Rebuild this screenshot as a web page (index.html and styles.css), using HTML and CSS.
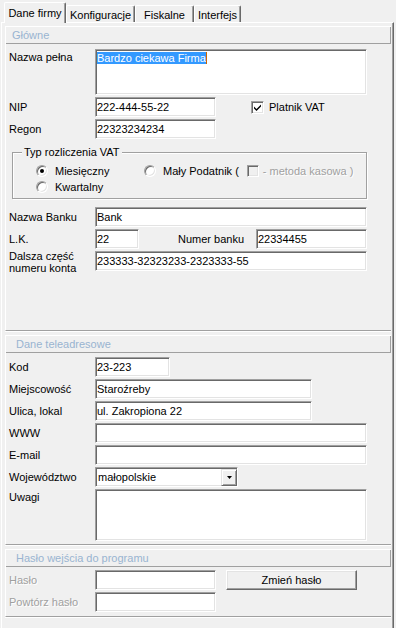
FILE: index.html
```html
<!DOCTYPE html>
<html lang="pl">
<head>
  <meta charset="UTF-8">
  <title>Dane firmy</title>
  <link rel="stylesheet" href="styles.css">
</head>
<body>
  <div class="tabs">
    <div class="tab tab-active">Dane firmy</div>
    <div class="tab tab-konf">Konfiguracje</div>
    <div class="tab tab-fisk">Fiskalne</div>
    <div class="tab tab-int">Interfejs</div>
  </div>

  <div class="page">
    <!-- Główne -->
    <div class="section">
      <div class="section-head head-main">Główne</div>
      <div class="section-body body-main">
        <div class="row row-top">
          <label class="lbl lbl-memo">Nazwa pełna</label>
          <div class="edit memo w-wide"><span class="sel">Bardzo ciekawa Firma</span></div>
        </div>
        <div class="row">
          <label class="lbl">NIP</label>
          <input class="edit w-short" type="text" value="222-444-55-22">
          <label class="chk-item"><span class="chk"><svg width="7" height="7" viewBox="0 0 7 7"><path d="M0 2.5 L2.5 5 L7 0.5 L7 2.5 L2.5 7 L0 4.5 Z" fill="#000"/></svg></span>Platnik VAT</label>
        </div>
        <div class="row">
          <label class="lbl">Regon</label>
          <input class="edit w-short" type="text" value="22323234234">
        </div>

        <fieldset class="group">
          <legend>Typ rozliczenia VAT</legend>
          <div class="radios">
            <label class="opt"><span class="radio radio-on"></span>Miesięczny</label>
            <label class="opt"><span class="radio"></span>Mały Podatnik (<span class="chk chk-off chk-inline"></span><span class="dim">- metoda kasowa )</span></label>
            <label class="opt"><span class="radio"></span>Kwartalny</label>
          </div>
        </fieldset>

        <div class="row row-bank">
          <label class="lbl">Nazwa Banku</label>
          <input class="edit w-wide" type="text" value="Bank">
        </div>
        <div class="row">
          <label class="lbl">L.K.</label>
          <input class="edit w-lk" type="text" value="22">
          <label class="lbl-mid">Numer banku</label>
          <input class="edit w-nr" type="text" value="22334455">
        </div>
        <div class="row row-top">
          <label class="lbl lbl-two">Dalsza część<br>numeru konta</label>
          <input class="edit w-wide" type="text" value="233333-32323233-2323333-55">
        </div>
      </div>
    </div>

    <!-- Dane teleadresowe -->
    <div class="section">
      <div class="section-head">Dane teleadresowe</div>
      <div class="section-body body-addr">
        <div class="row">
          <label class="lbl">Kod</label>
          <input class="edit w-kod" type="text" value="23-223">
        </div>
        <div class="row">
          <label class="lbl">Miejscowość</label>
          <input class="edit w-mid" type="text" value="Staroźreby">
        </div>
        <div class="row">
          <label class="lbl">Ulica, lokal</label>
          <input class="edit w-mid" type="text" value="ul. Zakropiona 22">
        </div>
        <div class="row">
          <label class="lbl">WWW</label>
          <input class="edit w-wide" type="text" value="">
        </div>
        <div class="row">
          <label class="lbl">E-mail</label>
          <input class="edit w-wide" type="text" value="">
        </div>
        <div class="row">
          <label class="lbl">Województwo</label>
          <div class="edit combo">
            <span class="combo-text">małopolskie</span>
            <span class="combo-btn"><svg width="5" height="3" viewBox="0 0 5 3"><polygon points="0,0 5,0 2.5,3" fill="#000"/></svg></span>
          </div>
        </div>
        <div class="row row-top">
          <label class="lbl lbl-memo">Uwagi</label>
          <textarea class="edit notes w-wide"></textarea>
        </div>
      </div>
    </div>

    <!-- Hasło -->
    <div class="section">
      <div class="section-head">Hasło wejścia do programu</div>
      <div class="section-body body-pass">
        <div class="row">
          <label class="lbl dim">Hasło</label>
          <input class="edit w-short" type="password" value="">
          <button class="btn" type="button">Zmień hasło</button>
        </div>
        <div class="row">
          <label class="lbl dim">Powtórz hasło</label>
          <input class="edit w-short" type="password" value="">
        </div>
      </div>
    </div>
  </div>
</body>
</html>
```

FILE: styles.css
```css
* { box-sizing: border-box; }
html { background: #f0f0f0; }
body {
  margin: 0; width: 396px; height: 628px; overflow: hidden;
  background: #f0f0f0; color: #000;
  font: 400 11px/13px "Liberation Sans", Arial, sans-serif;
}

/* tabs */
.tabs { display: flex; align-items: flex-end; height: 22px; padding-left: 4px; background: #f0f0f0; }
.tab {
  height: 17px; padding-top: 3px; text-align: center; background: #f0f0f0;
  border-top: 1px solid #fff; border-left: 1px solid #fff; border-right: 1px solid #696969;
  box-shadow: inset -1px 0 #a0a0a0; border-radius: 2px 2px 0 0;
}
.tab-active { width: 62px; height: 21px; padding-top: 4px; margin-bottom: -1px; position: relative; z-index: 1; }
.tab-konf { width: 69px; }
.tab-fisk { width: 59px; }
.tab-int { width: 47px; }

/* page */
.page {
  height: 606px; margin: 0 2px 0 1px; padding: 3px 2px 0 3px; background: #f0f0f0;
  border-top: 1px solid #fff; border-left: 1px solid #fff; border-right: 1px solid #696969;
  box-shadow: inset -1px 0 #a0a0a0;
}
.section { background: #f0f0f0; border-top: 1px solid #fff; border-left: 1px solid #fff; border-bottom: 1px solid #a0a0a0; box-shadow: 0 1px #fff; }
.section + .section { margin-top: 4px; }
.section-head {
  height: 17px; line-height: 16px; padding-left: 10px; color: #99b4d1;
  border-right: 1px solid #a0a0a0; border-bottom: 1px solid #a0a0a0;
}
.head-main { padding-left: 6px; }
.body-main { height: 286px; padding-top: 3px; }
.body-addr { padding: 2px 0 3px; }
.body-pass { padding: 1px 0 4px; }

/* rows */
.row { display: flex; align-items: center; margin-top: 2px; }
.row-top { align-items: flex-start; }
.row-bank { margin-top: 8px; }
.lbl { width: 89px; padding-left: 3px; flex-shrink: 0; white-space: nowrap; background: #f0f0f0; }
.lbl-memo { margin-top: 2px; }
.lbl-two { line-height: 12px; margin-top: -1px; }
.lbl-mid { width: 78px; margin-left: 39px; background: #f0f0f0; }
.dim { color: #a0a0a0; text-shadow: 1px 1px 0 #fff; }

/* edits */
.edit {
  height: 20px; padding: 0 1px; margin: 0; background: #fff; color: #000;
  font: inherit; outline: none;
  border: 1px solid; border-color: #a0a0a0 #fff #fff #a0a0a0;
  box-shadow: inset 1px 1px #696969, inset -1px -1px #e3e3e3;
}
.w-wide { width: 272px; }
.w-short { width: 121px; }
.w-lk { width: 44px; }
.w-nr { width: 111px; }
.w-kod { width: 75px; }
.w-mid { width: 217px; }
.memo { height: 46px; padding-top: 2px; line-height: 13px; }
.sel { background: #3399ff; color: #fff; border-right: 1px solid #cc6600; }
.notes { height: 52px; resize: none; }

/* checkbox & radios */
.chk-item { display: flex; align-items: center; margin-left: 35px; background: #f0f0f0; }
.chk {
  width: 13px; height: 13px; margin-right: 5px; background: #fff;
  display: flex; align-items: center; justify-content: center;
  border: 1px solid; border-color: #a0a0a0 #fff #fff #a0a0a0;
  box-shadow: inset 1px 1px #696969, inset -1px -1px #e3e3e3;
}
.chk-off { background: #f0f0f0; }
.chk-inline { width: 12px; height: 12px; margin: 0 4px 0 8px; }

.group {
  width: 355px; margin: 7px 0 0 6px; padding: 4px 0 3px; min-width: 0;
  border: 1px solid #a0a0a0; box-shadow: inset 1px 1px #fff, 1px 1px #fff;
}
.group legend { margin-left: 9px; padding: 0 2px; line-height: 13px; background: #f0f0f0; }
.radios { display: grid; grid-template-columns: 108px auto; grid-auto-rows: 16px; padding-left: 23px; }
.opt { display: flex; align-items: center; white-space: nowrap; background: #f0f0f0; }
.radio {
  width: 12px; height: 12px; margin-right: 7px; border-radius: 50%; background: #fff;
  border: 1px solid; border-color: #a0a0a0 #fff #fff #a0a0a0;
  box-shadow: inset 1px 1px #696969, inset -1px -1px #e3e3e3;
}
.radio-on::after { content: ""; display: block; width: 4px; height: 4px; margin: 3px; border-radius: 50%; background: #000; }

/* combo */
.combo { width: 143px; display: flex; align-items: center; padding: 0 0 0 2px; }
.combo-text { flex: 1; }
.combo-btn {
  width: 16px; height: 17px; background: #f0f0f0;
  display: flex; align-items: center; justify-content: center;
  border: 1px solid; border-color: #e3e3e3 #696969 #696969 #e3e3e3;
  box-shadow: inset 1px 1px #fff, inset -1px -1px #a0a0a0;
}

/* button */
.btn {
  width: 131px; height: 20px; margin-left: 10px; padding: 0; background: #f0f0f0;
  font: inherit; color: #000;
  border: 1px solid; border-color: #fff #696969 #696969 #fff;
  box-shadow: inset -1px -1px #a0a0a0, inset 1px 1px #e3e3e3;
}
```
